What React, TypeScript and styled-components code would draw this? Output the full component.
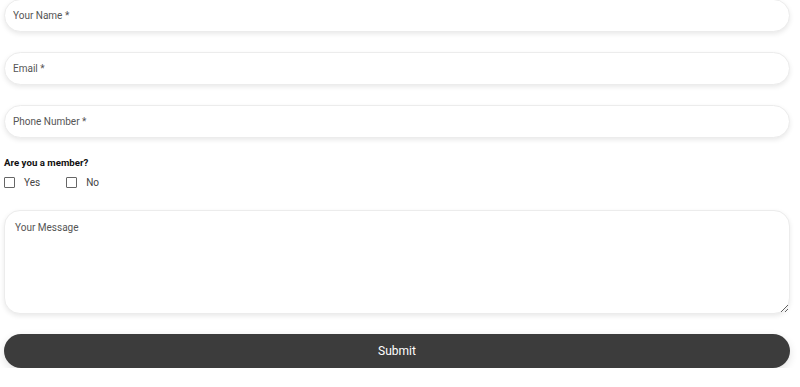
import React from "react";
import styled, { createGlobalStyle } from "styled-components";

const Global = createGlobalStyle`
  html, body { margin: 0; padding: 0; background: #fff; }
  body { font-family: Roboto, "Liberation Sans", sans-serif; }
  * { box-sizing: border-box; }
`;

const Form = styled.form`
  display: flex;
  flex-direction: column;
  width: 786px;
  margin: -1px 0 0 4px;
`;

const Input = styled.input`
  height: 33px;
  width: 100%;
  border: 1px solid #ececec;
  border-radius: 17px;
  padding: 0 8px;
  margin-bottom: 20px;
  font-family: Roboto, "Liberation Sans", sans-serif;
  font-size: 10px;
  color: #444;
  background: #fff;
  box-shadow: 0 2px 5px rgba(0, 0, 0, 0.09);
  outline: none;
  &::placeholder { color: #555; }
`;

const Question = styled.div`
  margin-top: -2px;
  font-size: 9.7px;
  font-weight: 700;
  line-height: 14px;
  color: #111;
`;

const Options = styled.div`
  display: flex;
  align-items: center;
  gap: 26px;
  margin-top: 5px;
  height: 14px;
`;

const Option = styled.label`
  display: flex;
  align-items: center;
  gap: 9px;
  font-size: 10px;
  color: #444;
`;

const Box = styled.span`
  width: 11px;
  height: 11px;
  border: 1px solid #666;
  border-radius: 1px;
  background: #fff;
`;

const Message = styled.textarea`
  margin-top: 21px;
  height: 104px;
  width: 100%;
  border: 1px solid #ececec;
  border-radius: 16px;
  padding: 11px 10px;
  font-family: Roboto, "Liberation Sans", sans-serif;
  font-size: 10px;
  color: #444;
  box-shadow: 0 2px 5px rgba(0, 0, 0, 0.09);
  outline: none;
  resize: vertical;
  &::placeholder { color: #555; }
`;

const Submit = styled.button`
  margin-top: 20px;
  height: 34px;
  width: 100%;
  border: none;
  border-radius: 17px;
  background: #3c3c3c;
  color: #fff;
  font-family: Roboto, "Liberation Sans", sans-serif;
  font-size: 12px;
  box-shadow: 0 3px 8px rgba(0, 0, 0, 0.12);
  cursor: pointer;
`;

export default function App() {
  return (
    <>
      <Global />
      <Form onSubmit={(e) => e.preventDefault()}>
        <Input placeholder="Your Name *" />
        <Input placeholder="Email *" />
        <Input placeholder="Phone Number *" />
        <Question>Are you a member?</Question>
        <Options>
          <Option><Box />Yes</Option>
          <Option><Box />No</Option>
        </Options>
        <Message placeholder="Your Message" />
        <Submit type="submit">Submit</Submit>
      </Form>
    </>
  );
}
